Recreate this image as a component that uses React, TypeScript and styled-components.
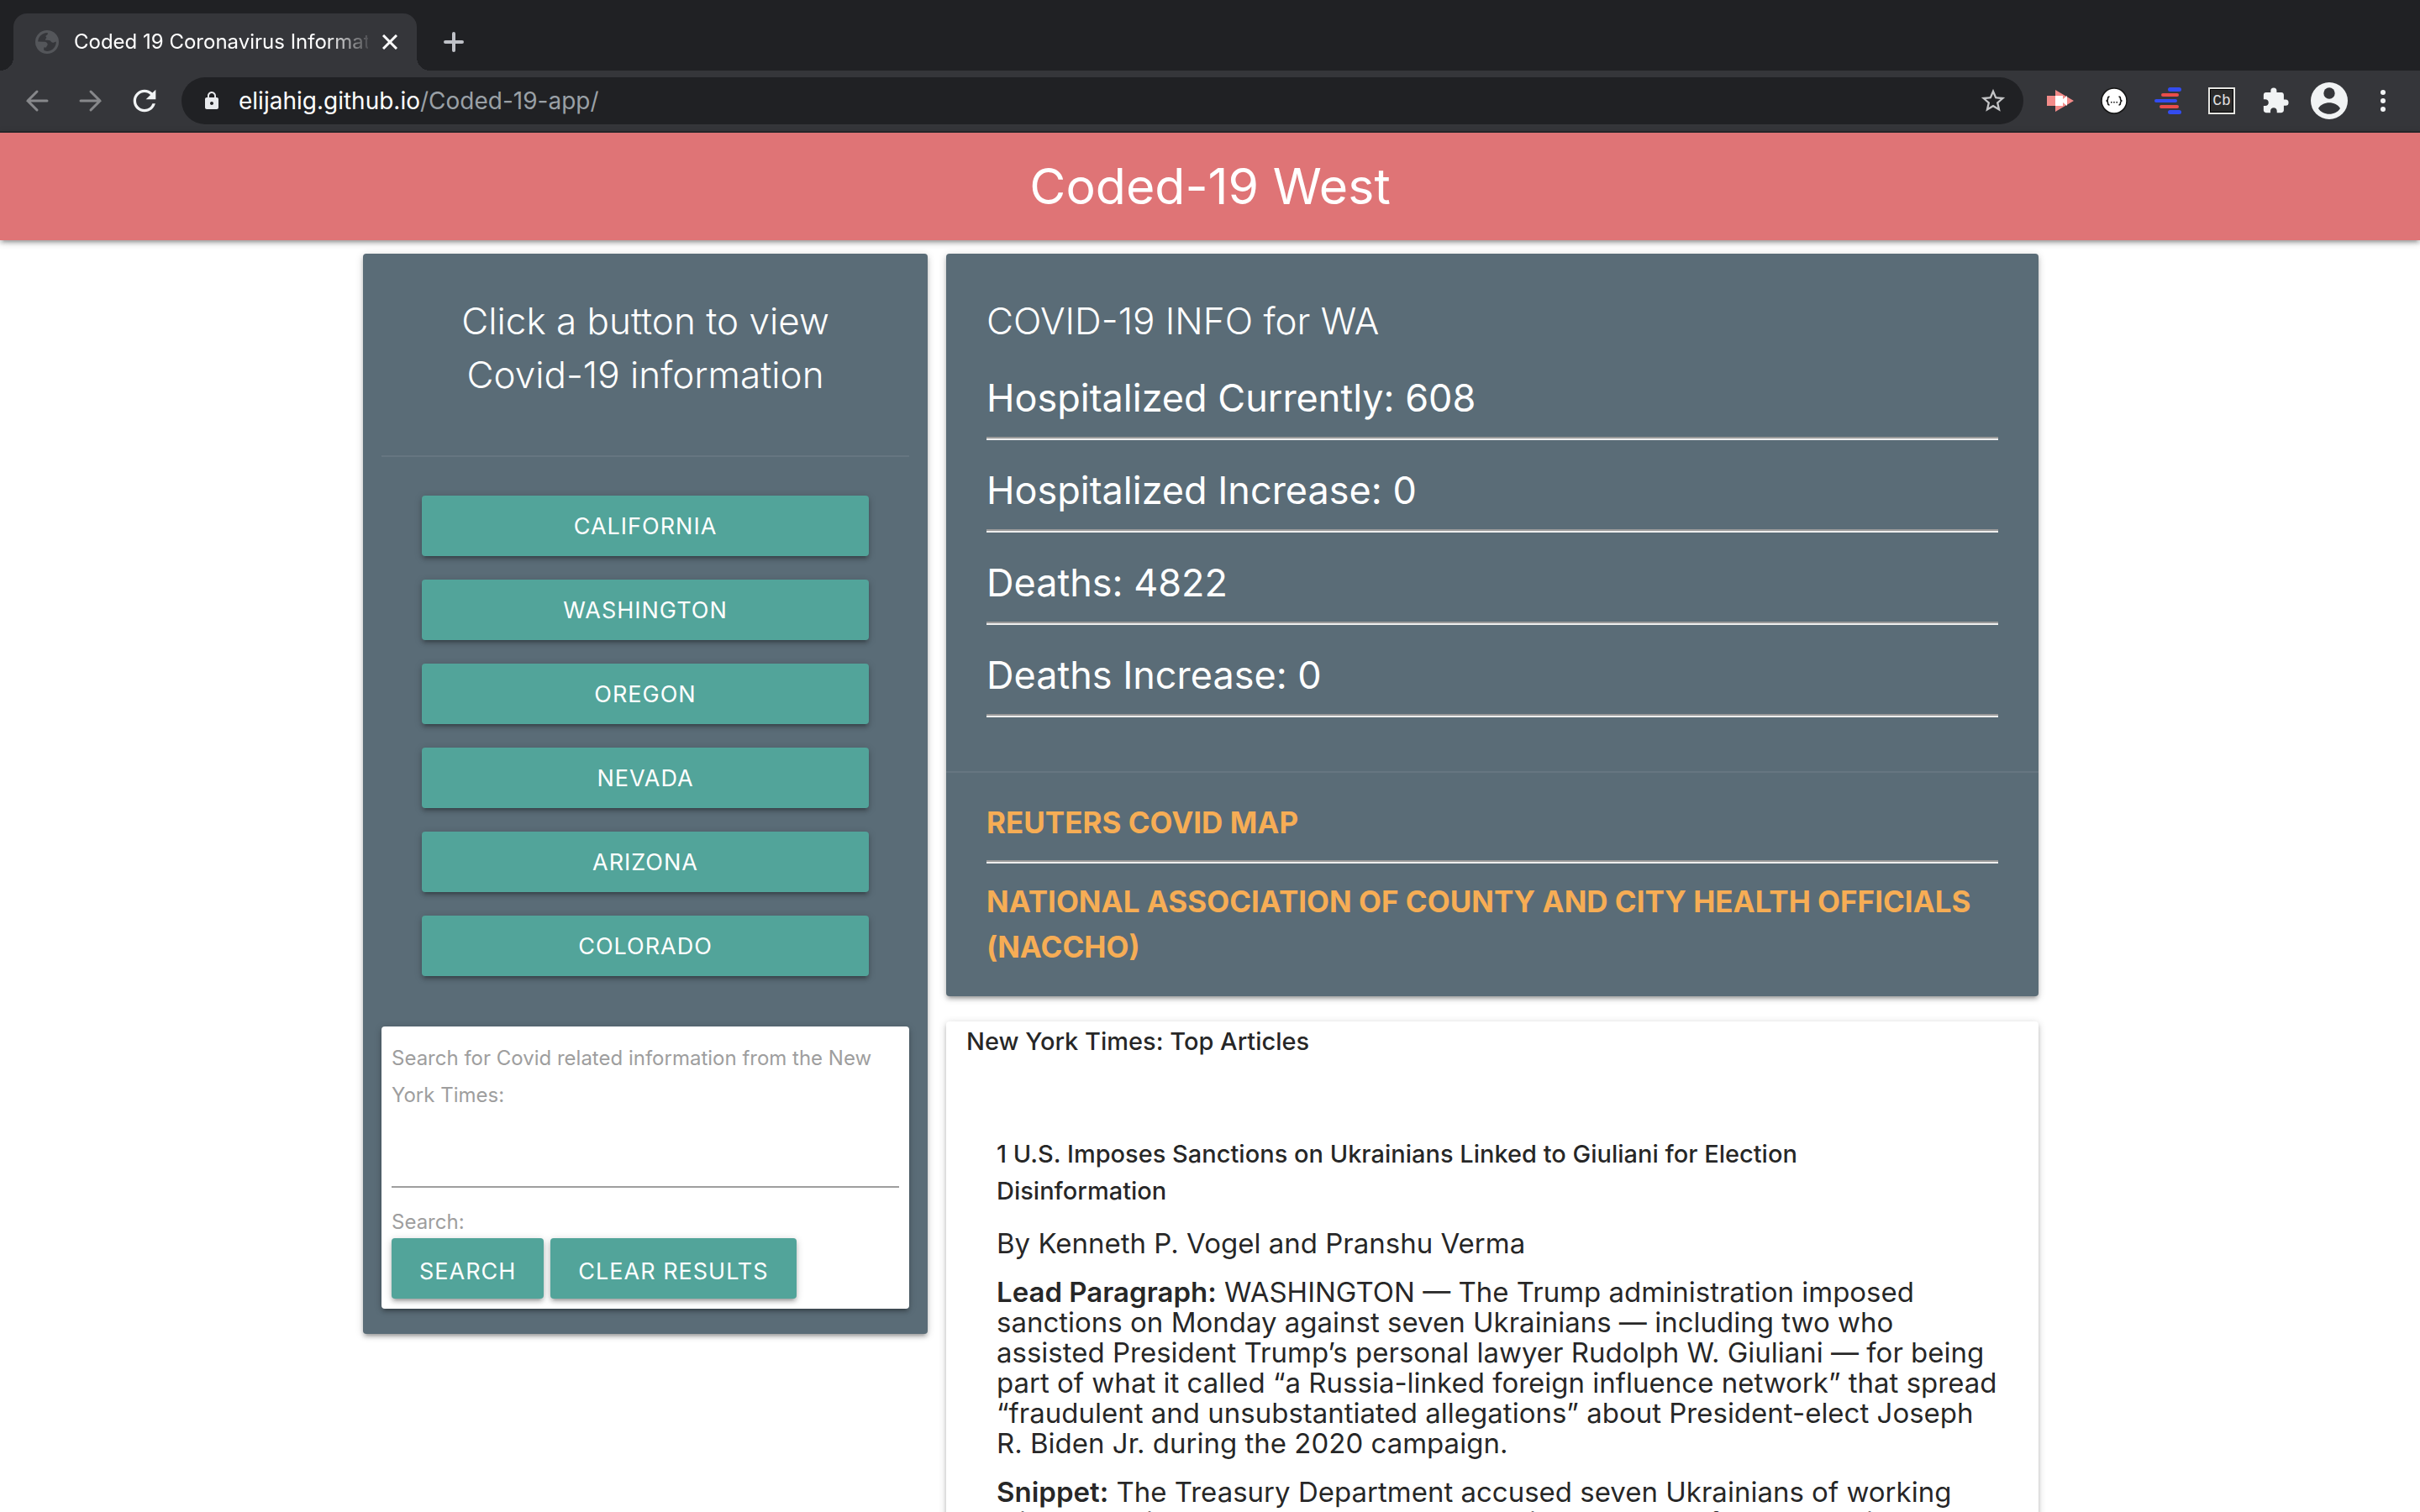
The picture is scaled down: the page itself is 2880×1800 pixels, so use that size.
import React from "react";
import styled, { createGlobalStyle } from "styled-components";
import { MdExtension, MdLock, MdRefresh, MdStarBorder } from "react-icons/md";

const Global = createGlobalStyle`
  *, *::before, *::after { box-sizing: border-box; }
  html, body { margin: 0; }
  body {
    background: #fff;
    color: rgba(0, 0, 0, 0.87);
    font-family: Inter, "Liberation Sans", sans-serif;
    font-size: 29px;
    line-height: 44px;
  }
  button, input { font: inherit; color: inherit; }
  h1, h2, h3, p, ul { margin: 0; padding: 0; font-size: inherit; font-weight: 400; }
  svg { display: block; flex: none; }
`;

const cardShadow =
  "0 4px 4px 0 rgba(0,0,0,0.14), 0 6px 2px -4px rgba(0,0,0,0.12), 0 2px 10px 0 rgba(0,0,0,0.2)";
const slate = "#5a6c77";
const teal = "#52a49a";
const toolbarGray = "#35363a";
const stripBlack = "#202124";

/* ---------- browser window ---------- */

const Page = styled.div`
  height: 100vh;
  overflow: hidden;
  display: flex;
  flex-direction: column;
`;

const TabStrip = styled.div`
  flex: none;
  display: flex;
  align-items: flex-end;
  height: 84px;
  padding-left: 16px;
  background: ${stripBlack};
`;

const Tab = styled.div`
  position: relative;
  display: flex;
  align-items: center;
  width: 480px;
  height: 68px;
  padding: 0 12px 0 26px;
  border-radius: 16px 16px 0 0;
  background: ${toolbarGray};
  color: #fff;
  font-size: 24px;
  line-height: 32px;

  &::before, &::after {
    content: "";
    position: absolute;
    bottom: 0;
    width: 16px;
    height: 16px;
  }
  &::before {
    right: 100%;
    background: radial-gradient(circle at 0 0, transparent 16px, ${toolbarGray} 16px);
  }
  &::after {
    left: 100%;
    background: radial-gradient(circle at 100% 0, transparent 16px, ${toolbarGray} 16px);
  }
`;

const TabTitle = styled.span`
  flex: 1;
  min-width: 0;
  margin: 0 6px 0 18px;
  overflow: hidden;
  white-space: nowrap;
  mask-image: linear-gradient(to right, #000 86%, transparent 102%);
`;

const IconButton = styled.button<{ $size?: number; $color?: string }>`
  flex: none;
  display: grid;
  place-items: center;
  width: ${(p) => p.$size ?? 64}px;
  height: ${(p) => p.$size ?? 64}px;
  padding: 0;
  border: 0;
  background: none;
  color: ${(p) => p.$color ?? "#f1f3f4"};
`;

const NewTab = styled(IconButton)`
  margin-left: 10px;
`;

const Toolbar = styled.div`
  flex: none;
  display: flex;
  align-items: center;
  height: 74px;
  padding: 0 12px;
  background: ${toolbarGray};
  border-bottom: 2px solid #27282b;
`;

const AddressBar = styled.div`
  flex: 1;
  display: flex;
  align-items: center;
  height: 56px;
  margin: 0 12px;
  padding: 0 8px 0 24px;
  border-radius: 28px;
  background: ${stripBlack};
  color: #e8eaed;
`;

const Url = styled.span`
  flex: 1;
  margin-left: 20px;
  color: #9aa0a6;
  font-size: 28px;
  line-height: 40px;
`;

const Host = styled.span`
  color: #fff;
`;

/* ---------- page ---------- */

const Banner = styled.header`
  flex: none;
  background: #df7476;
  color: #fff;
  text-align: center;
  box-shadow: ${cardShadow};
`;

const BannerTitle = styled.h1`
  font-size: 59px;
  line-height: 128px;
`;

const Columns = styled.main`
  flex: none;
  display: grid;
  grid-template-columns: 1fr 2fr;
  align-items: start;
  width: 70%;
  margin: 16px auto 0;
`;

const Card = styled.section<{ $dark?: boolean }>`
  border-radius: 4px;
  background: ${(p) => (p.$dark ? slate : "#fff")};
  color: ${(p) => (p.$dark ? "#fff" : "inherit")};
  box-shadow: ${cardShadow};
`;

const Sidebar = styled(Card)`
  padding: 0 22px 30px;
`;

const SidebarHead = styled.div`
  padding: 48px 48px 64px;
  text-align: center;
`;

const CardTitle = styled.h2`
  font-size: 44px;
  font-weight: 300;
  line-height: 64px;
`;

const StateList = styled.div`
  display: grid;
  gap: 28px;
  padding: 46px 48px 60px;
  border-top: 2px solid #667681;
`;

const Button = styled.button`
  height: 72px;
  padding: 2px 32px 0;
  border: 0;
  border-radius: 4px;
  background: ${teal};
  color: #fff;
  font-size: 27px;
  line-height: 36px;
  letter-spacing: 1px;
  text-transform: uppercase;
  box-shadow: ${cardShadow};
`;

const FormButton = styled(Button)`
  padding: 8px 33px 0;
`;

const SearchCard = styled.form`
  display: flex;
  flex-direction: column;
  padding: 16px 12px 12px;
  border-radius: 4px;
  background: #fff;
  box-shadow: ${cardShadow};
`;

const Label = styled.label`
  color: #9e9e9e;
  font-size: 24px;
  line-height: 44px;
`;

const Caption = styled.span`
  color: #9e9e9e;
  font-size: 24px;
  line-height: 38px;
`;

const SearchField = styled.input`
  width: 100%;
  height: 88px;
  margin-bottom: 22px;
  padding: 0;
  border: 0;
  border-bottom: 2px solid #9e9e9e;
  outline: 0;
  background: transparent;
`;

const ButtonRow = styled.div`
  display: flex;
  gap: 8px;
`;

const MainColumn = styled.div`
  display: grid;
  gap: 30px;
  padding: 0 22px;
`;

const Stats = styled.div`
  padding: 48px 48px 64px;
`;

const StatList = styled.ul`
  list-style: none;
`;

const Stat = styled.li`
  padding: 26px 0 14px;
  border-bottom: 2px solid #eee;
  font-size: 45px;
  line-height: 68px;
  box-shadow: inset 0 -2px 0 #9a9a9a;
`;

const Links = styled.nav`
  display: grid;
  padding: 32px 48px;
  border-top: 2px solid #667681;
`;

const ResourceLink = styled.a`
  color: #f6ad55;
  font-size: 35px;
  font-weight: 700;
  line-height: 54px;
  text-decoration: none;
  text-transform: uppercase;
`;

const Rule = styled.hr`
  width: 100%;
  height: 4px;
  margin: 18px 0;
  border: 0;
  border-top: 2px solid #9a9a9a;
  background: #eee;
`;

const Articles = styled(Card)`
  padding: 0 24px;
`;

const ArticlesTitle = styled.h2`
  font-weight: 500;
  line-height: 48px;
`;

const Article = styled.article`
  display: grid;
  gap: 22px;
  padding: 88px 22px 88px 36px;
`;

const Headline = styled.h3`
  padding-right: 64px;
  font-weight: 500;
`;

const Text = styled.p`
  font-size: 33px;
  line-height: 36px;
`;

const Strong = styled.strong`
  font-weight: 600;
`;

/* ---------- drawings ---------- */

const GlobeIcon = () => (
  <svg width="28" height="28" viewBox="0 0 28 28">
    <circle cx="14" cy="14" r="14" fill="#54565a" />
    <path
      fill={toolbarGray}
      d="M3.2 13.6C3.4 8 8 3.2 14.2 3.1c1.2.3.8 2-.4 2.6-1.4.5-1.8 1.4-1 2.2.9.7.4 1.7-.5 2.3-.9.8-.2 1.5.8 1.6 2 .1 4.3 0 5.3 1.3.6 1.3 1.900 2 3.300 1.600.9-.4 2.200-1.200 3.100-1.300.4 6-4.600 11.400-10.800 11.500-1.600-.2-2.900-.6-3.800-1.100v-3.200h2.800c.3-1.500 1.400-2.200 1.700-3.500.2-1.700-1.300-3-3-3.400z"
    />
  </svg>
);

const CloseIcon = () => (
  <svg width="18" height="18" viewBox="0 0 18 18" stroke="#fff" strokeWidth="3">
    <path d="M1 1l16 16M17 1L1 17" />
  </svg>
);

const PlusIcon = () => (
  <svg width="26" height="26" viewBox="0 0 26 26" stroke="currentColor" strokeWidth="4" strokeLinecap="round">
    <path d="M13 3v20M3 13h20" />
  </svg>
);

const ArrowIcon = ({ forward = false }: { forward?: boolean }) => (
  <svg width="28" height="28" viewBox="0 0 28 28" fill="none" stroke="currentColor" strokeWidth="3" strokeLinecap="round">
    <path d={forward ? "M2 14h23M14 3l11 11-11 11" : "M26 14H3M14 3L3 14l11 11"} />
  </svg>
);

const CameraIcon = () => (
  <svg width="32" height="32" viewBox="0 0 32 32">
    <path fill="#f28b89" d="M0 10h10V3l22 13-22 13v-7H0z" />
    <path fill="#fff" d="M10 10h9v4l5-4v12l-5-4v4h-9z" />
  </svg>
);

const BracesIcon = () => (
  <svg width="32" height="32" viewBox="0 0 32 32">
    <circle cx="16" cy="16" r="15" fill="#fff" stroke="#141414" strokeWidth="1.5" />
    <path
      fill="none"
      stroke="#111"
      strokeWidth="1.5"
      d="M10.500 11c-2 0-2 1-2 2.500S8 16 6.500 16c1.500 0 2 1 2 2.500s0 2.500 2 2.500M21.500 11c2 0 2 1 2 2.500s.5 2.500 2 2.500c-1.500 0-2 1-2 2.500s0 2.500-2 2.500"
    />
    <path fill="#111" d="M12 17h1.500v1.500H12zM15.200 17h1.500v1.500h-1.500zM18.500 17H20v1.500h-1.500z" />
  </svg>
);

const BarsIcon = () => (
  <svg width="32" height="32" viewBox="0 0 32 32">
    <g fill="#334cf0">
      <rect x="16" y="0" width="16" height="5" rx="2.5" />
      <rect x="0" y="14" width="27" height="4" rx="2" />
      <rect x="16" y="27" width="16" height="5" rx="2.5" />
    </g>
    <g fill="#ea4d49">
      <rect x="8" y="7" width="21" height="4" rx="2" />
      <rect x="6" y="21" width="23" height="4" rx="2" />
    </g>
  </svg>
);

const CbBadge = styled.span`
  display: grid;
  place-items: center;
  width: 32px;
  height: 32px;
  border: 2px solid #e6e6e2;
  background: #2b2b2b;
  box-shadow: inset 0 0 0 1px #000;
  color: #e0e0e0;
  font: 18px/28px "Liberation Mono", monospace;
`;

const AvatarIcon = () => (
  <svg width="44" height="44" viewBox="-22 -22 44 44">
    <circle r="22" fill="currentColor" />
    <circle cy="-9" r="6.7" fill={toolbarGray} />
    <path fill={toolbarGray} d="M-13 9C-8 0 8 0 13 9 8 18-8 18-13 9z" />
  </svg>
);

const DotsIcon = () => (
  <svg width="8" height="28" viewBox="0 0 8 28" fill="currentColor">
    <circle cx="4" cy="4" r="3" />
    <circle cx="4" cy="14" r="3" />
    <circle cx="4" cy="24" r="3" />
  </svg>
);

/* ---------- content ---------- */

const states = ["California", "Washington", "Oregon", "Nevada", "Arizona", "Colorado"];

const stats: [string, number][] = [
  ["Hospitalized Currently", 608],
  ["Hospitalized Increase", 0],
  ["Deaths", 4822],
  ["Deaths Increase", 0],
];

const extensions: [string, React.ReactNode][] = [
  ["Screen recorder", <CameraIcon />],
  ["JSON viewer", <BracesIcon />],
  ["Outline", <BarsIcon />],
  ["Codebase", <CbBadge>Cb</CbBadge>],
  ["Extensions", <MdExtension size={34} />],
  ["Profile", <AvatarIcon />],
  ["Menu", <DotsIcon />],
];

function BrowserChrome() {
  return (
    <>
      <TabStrip>
        <Tab>
          <GlobeIcon />
          <TabTitle>Coded 19 Coronavirus Information</TabTitle>
          <IconButton $size={40} aria-label="Close tab">
            <CloseIcon />
          </IconButton>
        </Tab>
        <NewTab $size={68} $color="#bfc1c7" aria-label="New tab">
          <PlusIcon />
        </NewTab>
      </TabStrip>
      <Toolbar>
        <IconButton $color="#87888b" aria-label="Back">
          <ArrowIcon />
        </IconButton>
        <IconButton $color="#87888b" aria-label="Forward">
          <ArrowIcon forward />
        </IconButton>
        <IconButton aria-label="Reload">
          <MdRefresh size={40} />
        </IconButton>
        <AddressBar>
          <MdLock size={24} />
          <Url>
            <Host>elijahig.github.io</Host>/Coded-19-app/
          </Url>
          <IconButton $size={56} $color="#c4c5c7" aria-label="Bookmark">
            <MdStarBorder size={34} />
          </IconButton>
        </AddressBar>
        {extensions.map(([name, icon]) => (
          <IconButton key={name} aria-label={name}>
            {icon}
          </IconButton>
        ))}
      </Toolbar>
    </>
  );
}

export default function App() {
  return (
    <Page>
      <Global />
      <BrowserChrome />
      <Banner>
        <BannerTitle>Coded-19 West</BannerTitle>
      </Banner>
      <Columns>
        <Sidebar $dark>
          <SidebarHead>
            <CardTitle>Click a button to view Covid-19 information</CardTitle>
          </SidebarHead>
          <StateList>
            {states.map((name) => (
              <Button key={name} type="button">
                {name}
              </Button>
            ))}
          </StateList>
          <SearchCard onSubmit={(e) => e.preventDefault()}>
            <Label htmlFor="term">Search for Covid related information from the New York Times:</Label>
            <SearchField id="term" type="text" />
            <Caption>Search:</Caption>
            <ButtonRow>
              <FormButton type="submit">Search</FormButton>
              <FormButton type="reset">Clear Results</FormButton>
            </ButtonRow>
          </SearchCard>
        </Sidebar>
        <MainColumn>
          <Card $dark>
            <Stats>
              <CardTitle>COVID-19 INFO for WA</CardTitle>
              <StatList>
                {stats.map(([name, value]) => (
                  <Stat key={name}>
                    {name}: {value}
                  </Stat>
                ))}
              </StatList>
            </Stats>
            <Links>
              <ResourceLink href="#reuters">Reuters Covid Map</ResourceLink>
              <Rule />
              <ResourceLink href="#naccho">
                National Association of County and City Health Officials (NACCHO)
              </ResourceLink>
            </Links>
          </Card>
          <Articles>
            <ArticlesTitle>New York Times: Top Articles</ArticlesTitle>
            <Article>
              <Headline>
                1 U.S. Imposes Sanctions on Ukrainians Linked to Giuliani for Election Disinformation
              </Headline>
              <Text>By Kenneth P. Vogel and Pranshu Verma</Text>
              <Text>
                <Strong>Lead Paragraph:</Strong> WASHINGTON — The Trump administration imposed sanctions
                on Monday against seven Ukrainians — including two who assisted President Trump’s
                personal lawyer Rudolph W. Giuliani — for being part of what it called “a Russia-linked
                foreign influence network” that spread “fraudulent and unsubstantiated allegations”
                about President-elect Joseph R. Biden Jr. during the 2020 campaign.
              </Text>
              <Text>
                <Strong>Snippet:</Strong> The Treasury Department accused seven Ukrainians of working
                with a Russian spy on “concerted campaign to spread false allegations”
              </Text>
            </Article>
          </Articles>
        </MainColumn>
      </Columns>
    </Page>
  );
}
